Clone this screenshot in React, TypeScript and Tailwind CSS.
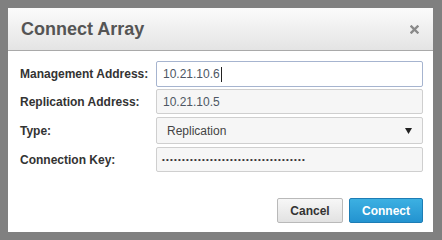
import React from 'react';

const font = { fontFamily: '"Liberation Sans", Arial, sans-serif' };

const Row: React.FC<{ label: string; className?: string; children: React.ReactNode }> = ({ label, className, children }) => (
  <div className={`flex items-center ${className ?? ''}`}>
    <label className="w-[136px] shrink-0 text-[12px] font-bold text-[#333]">{label}</label>
    {children}
  </div>
);

export default function App() {
  return (
    <div className="w-[442px] h-[240px] bg-[#808080] p-2" style={font}>
      <div className="w-[425px] h-[224px] bg-white flex flex-col">
        <div className="h-[43px] flex items-center justify-between pl-[13px] pr-[14px] bg-gradient-to-b from-[#fbfbfb] to-[#e4e4e4] border-b border-[#a9a9a9]">
          <h2 className="text-[18px] font-bold text-[#555]">Connect Array</h2>
          <svg width="9" height="9" viewBox="0 0 9 9" className="mt-[1px]">
            <path d="M1.5 1.5 L7.5 7.5 M7.5 1.5 L1.5 7.5" stroke="#8a8a8a" strokeWidth="2.4" strokeLinecap="square" />
          </svg>
        </div>

        <div className="flex flex-col pl-3 pr-[10px] pt-[10px]">
          <Row label="Management Address:">
            <div className="flex-1 h-[26px] flex items-center pl-[6px] border border-[#a6b4cf] rounded-[2px] bg-white text-[12px] text-[#4d5663]">
              10.21.10.6
              <span className="inline-block w-px h-[15px] bg-[#222] ml-[1px]" />
            </div>
          </Row>
          <Row label="Replication Address:" className="mt-[2px]">
            <div className="flex-1 h-[25px] flex items-center pl-[6px] border border-[#cfcfcf] rounded-[2px] bg-[#f6f6f6] text-[12px] text-[#4d5663]">
              10.21.10.5
            </div>
          </Row>
          <Row label="Type:" className="mt-[3px]">
            <div className="flex-1 h-[27px] flex items-center justify-between pl-[10px] pr-[10px] border border-[#cfcfcf] rounded-[2px] bg-[#f6f6f6] text-[12px] text-[#444]">
              <span>Replication</span>
              <svg width="7" height="6" viewBox="0 0 7 6">
                <polygon points="0,0 7,0 3.5,6" fill="#222" />
              </svg>
            </div>
          </Row>
          <Row label="Connection Key:" className="mt-[3px]">
            <div className="flex-1 h-[25px] flex items-center pl-[5px] border border-[#cfcfcf] rounded-[2px] bg-[#f6f6f6] text-[8px] tracking-[1.2px] text-[#333] overflow-hidden">
              {'•'.repeat(36)}
            </div>
          </Row>
        </div>

        <div className="flex justify-end gap-[6px] pr-[10px] mt-auto mb-[9px]">
          <button className="w-[66px] h-[25px] text-[12px] font-bold text-[#333] border border-[#b9b9b9] rounded-[2px] bg-gradient-to-b from-[#f7f7f7] to-[#e2e2e2]">
            Cancel
          </button>
          <button className="w-[74px] h-[25px] text-[12px] font-bold text-white border border-[#1d7db5] rounded-[2px] bg-gradient-to-b from-[#3cb0e2] to-[#2393d0]">
            Connect
          </button>
        </div>
      </div>
    </div>
  );
}
